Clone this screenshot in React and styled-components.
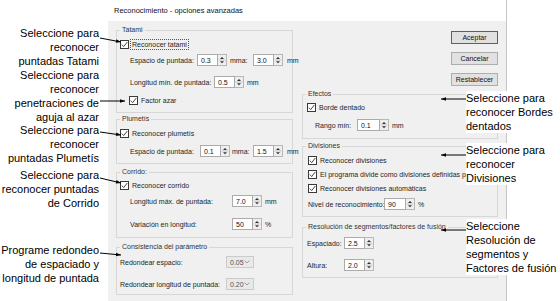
import React from 'react';
import styled, { createGlobalStyle } from 'styled-components';

const GlobalStyle = createGlobalStyle`
  html, body {
    margin: 0;
    padding: 0;
    background: #fff;
  }
  body {
    font-family: "Liberation Sans", Arial, sans-serif;
  }
`;

const Page = styled.div`
  position: relative;
  width: 560px;
  height: 301px;
  overflow: hidden;
  display: flex;
  background: #fff;
`;

const Gutter = styled.div`
  width: 108px;
  flex: none;
`;

const Window = styled.div`
  width: 399px;
  flex: none;
  display: flex;
  flex-direction: column;
  border-right: 1px solid #c6c6c6;
  box-sizing: border-box;
`;

const TitleBar = styled.div`
  height: 21px;
  flex: none;
  display: flex;
  align-items: center;
  padding-left: 6px;
  font-size: 7.5px;
  color: #111;
  background: #fff;
`;

const Body = styled.div`
  flex: 1;
  display: flex;
  gap: 9px;
  padding: 0 8px;
  background: #f0f0f0;
`;

const Column = styled.div`
  width: ${p => p.w}px;
  flex: none;
  display: flex;
  flex-direction: column;
  padding-top: ${p => p.pt}px;
`;

const Group = styled.fieldset`
  margin: ${p => p.mt || 0}px 0 0;
  padding: 0;
  height: ${p => p.h}px;
  min-width: 0;
  box-sizing: border-box;
  border: 1px solid #d7d7d7;
  display: flex;
  flex-direction: column;
`;

const Legend = styled.legend`
  margin-left: 3px;
  padding: 0 2px;
  font-size: 7px;
  line-height: 10px;
  color: #333;
`;

const Row = styled.div`
  display: flex;
  align-items: center;
  height: 12px;
  margin-top: ${p => p.mt || 0}px;
  padding-left: ${p => p.pl || 0}px;
  font-size: 7px;
  color: #1e1e1e;
  white-space: nowrap;
`;

const FieldLabel = styled.span`
  width: ${p => p.w}px;
  flex: none;
`;

const Box = styled.span`
  width: 9px;
  height: 9px;
  flex: none;
  box-sizing: border-box;
  border: 1px solid #3a3a3a;
  background: #fff;
  display: flex;
`;

const CheckText = styled.span`
  margin-left: 2px;
  padding: 0 1px;
  line-height: 9px;
  outline: ${p => (p.focus ? '1px dotted #555' : 'none')};
`;

const SpinField = styled.div`
  display: flex;
  height: 12px;
  flex: none;
`;

const SpinInput = styled.div`
  width: ${p => p.w || 21}px;
  box-sizing: border-box;
  border: 1px solid #ababab;
  background: #fff;
  padding-left: 3px;
  display: flex;
  align-items: center;
  color: #111;
`;

const SpinButtons = styled.div`
  width: 9px;
  box-sizing: border-box;
  border: 1px solid #b8b8b8;
  border-left: none;
  background: #eeeeee;
  display: flex;
`;

const Unit = styled.span`
  margin-left: ${p => p.ml || 3}px;
  width: ${p => (p.w ? `${p.w}px` : 'auto')};
  flex: none;
`;

const Select = styled.div`
  width: 28px;
  height: 12px;
  box-sizing: border-box;
  border: 1px solid #cbcbcb;
  background: #e9e9e9;
  color: #555;
  padding: 0 3px;
  display: flex;
  align-items: center;
  justify-content: space-between;
`;

const Buttons = styled.div`
  display: flex;
  flex-direction: column;
  align-items: flex-end;
  gap: 8px;
`;

const Button = styled.div`
  width: 47px;
  height: 13px;
  box-sizing: border-box;
  border: 1px solid ${p => (p.primary ? '#0078d7' : '#adadad')};
  background: #e1e1e1;
  font-size: 7px;
  color: #111;
  display: flex;
  align-items: center;
  justify-content: center;
`;

const Note = styled.div`
  position: absolute;
  top: ${p => p.top}px;
  ${p => (p.side === 'left' ? `right: ${560 - p.x}px; text-align: right;` : `left: ${p.x}px; padding-right: 6px;`)}
  font-size: 11px;
  line-height: 14px;
  color: #000;
  white-space: nowrap;
  background: ${p => (p.side === 'left' ? 'transparent' : '#fff')};
`;

const Leaders = styled.svg`
  position: absolute;
  left: 0;
  top: 0;
  pointer-events: none;
`;

const Check = ({ label, focus }) => (
  <>
    <Box>
      <svg width="7" height="7" viewBox="0 0 7 7">
        <path d="M0.8 3.6 L2.7 5.6 L6.3 1" fill="none" stroke="#333" strokeWidth="0.9" />
      </svg>
    </Box>
    <CheckText focus={focus}>{label}</CheckText>
  </>
);

const Spin = ({ value, w }) => (
  <SpinField>
    <SpinInput w={w}>{value}</SpinInput>
    <SpinButtons>
      <svg width="8" height="10" viewBox="0 0 8 10">
        <path d="M2 4 L4 2 L6 4 Z" fill="#333" />
        <line x1="0.5" y1="5" x2="7.5" y2="5" stroke="#c9c9c9" strokeWidth="1" />
        <path d="M2 6.2 L6 6.2 L4 8.2 Z" fill="#333" />
      </svg>
    </SpinButtons>
  </SpinField>
);

const Dropdown = ({ value }) => (
  <Select>
    <span>{value}</span>
    <svg width="6" height="4" viewBox="0 0 6 4">
      <polyline points="0.5,0.5 3,3 5.5,0.5" fill="none" stroke="#888" strokeWidth="0.8" />
    </svg>
  </Select>
);

const leftNotes = [
  { top: 26, lines: ['Seleccione para', 'reconocer', 'puntadas Tatami'] },
  { top: 68, lines: ['Seleccione para', 'reconocer', 'penetraciones de', 'aguja al azar'] },
  { top: 123, lines: ['Seleccione para', 'reconocer', 'puntadas Plumetís'] },
  { top: 168, lines: ['Seleccione para', 'reconocer puntadas', 'de Corrido'] },
  { top: 243, lines: ['Programe redondeo', 'de espaciado y', 'longitud de puntada'] },
];

const rightNotes = [
  { top: 91, lines: ['Seleccione para', 'reconocer Bordes', 'dentados'] },
  { top: 143, lines: ['Seleccione para', 'reconocer', 'Divisiones'] },
  { top: 219, lines: ['Seleccione', 'Resolución de', 'segmentos y', 'Factores de fusión'] },
];

const arrows = [
  [100, 38, 121, 42],
  [100, 101, 125, 101],
  [100, 132, 121, 135],
  [100, 178, 121, 183],
  [100, 253, 121, 255],
  [466, 99, 441, 99],
  [466, 155, 441, 155],
  [466, 230, 441, 230],
];

const head = ([x1, y1, x2, y2]) => {
  const len = Math.hypot(x2 - x1, y2 - y1);
  const ux = (x2 - x1) / len;
  const uy = (y2 - y1) / len;
  const bx = x2 - ux * 5;
  const by = y2 - uy * 5;
  return `${x2},${y2} ${bx - uy * 1.8},${by + ux * 1.8} ${bx + uy * 1.8},${by - ux * 1.8}`;
};

export default function App() {
  return (
    <Page>
      <GlobalStyle />
      <Gutter />
      <Window>
        <TitleBar>Reconocimiento - opciones avanzadas</TitleBar>
        <Body>
          <Column w={177} pt={4}>
            <Group h={88}>
              <Legend>Tatami</Legend>
              <Row mt={3} pl={3}>
                <Check label="Reconocer tatami" focus />
              </Row>
              <Row mt={4} pl={13}>
                <FieldLabel w={67}>Espacio de puntada:</FieldLabel>
                <Spin value="0.3" />
                <Unit ml={3} w={23}>mma:</Unit>
                <Spin value="3.0" />
                <Unit ml={4}>mm</Unit>
              </Row>
              <Row mt={10} pl={13}>
                <FieldLabel w={84}>Longitud mín. de puntada:</FieldLabel>
                <Spin value="0.5" />
                <Unit>mm</Unit>
              </Row>
              <Row mt={6} pl={12}>
                <Check label="Factor azar" />
              </Row>
            </Group>

            <Group mt={1} h={50}>
              <Legend>Plumetís</Legend>
              <Row mt={3} pl={3}>
                <Check label="Reconocer plumetís" />
              </Row>
              <Row mt={6} pl={13}>
                <FieldLabel w={70}>Espacio de puntada:</FieldLabel>
                <Spin value="0.1" />
                <Unit ml={2} w={21}>mma:</Unit>
                <Spin value="1.5" />
                <Unit ml={4}>mm</Unit>
              </Row>
            </Group>

            <Group mt={3} h={71}>
              <Legend>Corrido:</Legend>
              <Row mt={2} pl={3}>
                <Check label="Reconocer corrido" />
              </Row>
              <Row mt={4} pl={13}>
                <FieldLabel w={102}>Longitud máx. de puntada:</FieldLabel>
                <Spin value="7.0" />
                <Unit>mm</Unit>
              </Row>
              <Row mt={11} pl={13}>
                <FieldLabel w={102}>Variación en longitud:</FieldLabel>
                <Spin value="50" />
                <Unit>%</Unit>
              </Row>
            </Group>

            <Group mt={4} h={53}>
              <Legend>Consistencia del parámetro</Legend>
              <Row mt={4} pl={3}>
                <FieldLabel w={106}>Redondear espacio:</FieldLabel>
                <Dropdown value="0.05" />
              </Row>
              <Row mt={10} pl={3}>
                <FieldLabel w={106}>Redondear longitud de puntada:</FieldLabel>
                <Dropdown value="0.20" />
              </Row>
            </Group>
          </Column>

          <Column w={196} pt={10}>
            <Buttons>
              <Button primary>Aceptar</Button>
              <Button>Cancelar</Button>
              <Button>Restablecer</Button>
            </Buttons>

            <Group mt={3} h={50}>
              <Legend>Efectos</Legend>
              <Row mt={2} pl={4}>
                <Check label="Borde dentado" />
              </Row>
              <Row mt={6} pl={12}>
                <FieldLabel w={42}>Rango mín:</FieldLabel>
                <Spin value="0.1" w={23} />
                <Unit>mm</Unit>
              </Row>
            </Group>

            <Group mt={2} h={76}>
              <Legend>Divisiones</Legend>
              <Row mt={3} pl={5}>
                <Check label="Reconocer divisiones" />
              </Row>
              <Row mt={2} pl={5}>
                <Check label="El programa divide como divisiones definidas por" />
              </Row>
              <Row mt={2} pl={5}>
                <Check label="Reconocer divisiones automáticas" />
              </Row>
              <Row mt={4} pl={5}>
                <FieldLabel w={76}>Nivel de reconocimiento:</FieldLabel>
                <Spin value="90" w={22} />
                <Unit>%</Unit>
              </Row>
            </Group>

            <Group mt={5} h={56}>
              <Legend>Resolución de segmentos/factores de fusión</Legend>
              <Row mt={5} pl={4}>
                <FieldLabel w={37}>Espaciado:</FieldLabel>
                <Spin value="2.5" />
              </Row>
              <Row mt={10} pl={4}>
                <FieldLabel w={37}>Altura:</FieldLabel>
                <Spin value="2.0" />
              </Row>
            </Group>
          </Column>
        </Body>
      </Window>

      {leftNotes.map(n => (
        <Note key={n.top} side="left" x={99} top={n.top}>
          {n.lines.map(l => <div key={l}>{l}</div>)}
        </Note>
      ))}
      {rightNotes.map(n => (
        <Note key={n.top} side="right" x={466} top={n.top}>
          {n.lines.map(l => <div key={l}>{l}</div>)}
        </Note>
      ))}

      <Leaders width="560" height="301" viewBox="0 0 560 301">
        {arrows.map(a => (
          <g key={a.join('-')}>
            <line x1={a[0]} y1={a[1]} x2={a[2]} y2={a[3]} stroke="#000" strokeWidth="1" />
            <polygon points={head(a)} fill="#000" />
          </g>
        ))}
      </Leaders>
    </Page>
  );
}
